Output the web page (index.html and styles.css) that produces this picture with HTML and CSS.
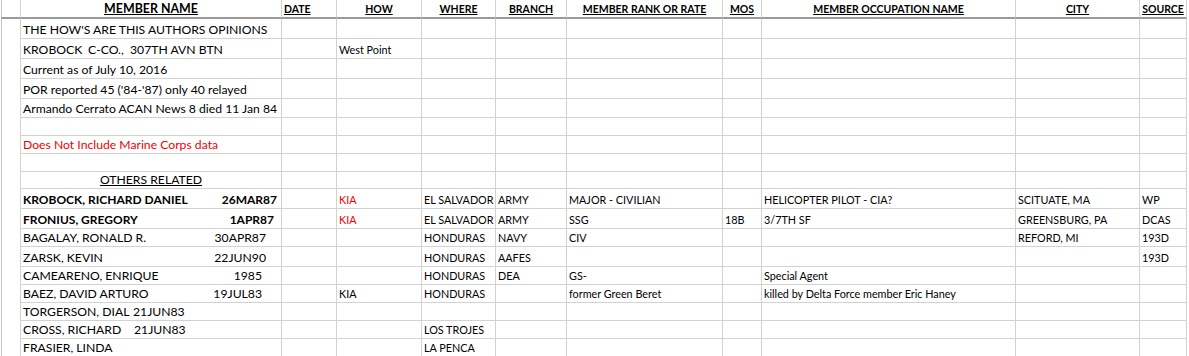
FILE: index.html
```html
<!DOCTYPE html>
<html lang="en">
<head>
<meta charset="utf-8">
<title>Member list</title>
<link rel="stylesheet" href="styles.css">
</head>
<body>
<div class="sheet">
  <div class="row head">
    <div class="c c0"></div>
    <div class="c ctr"><span class="hd big">MEMBER NAME</span></div>
    <div class="c"><span class="hd">DATE</span></div>
    <div class="c ctr"><span class="hd">HOW</span></div>
    <div class="c ctr"><span class="hd">WHERE</span></div>
    <div class="c ctr"><span class="hd">BRANCH</span></div>
    <div class="c ctr"><span class="hd">MEMBER RANK OR RATE</span></div>
    <div class="c ctr"><span class="hd">MOS</span></div>
    <div class="c ctr"><span class="hd">MEMBER OCCUPATION NAME</span></div>
    <div class="c ctr"><span class="hd">CITY</span></div>
    <div class="c ctr"><span class="hd">SOURCE</span></div>
  </div>

  <div class="row h20">
    <div class="c c0"></div><div class="c nm">THE HOW'S ARE THIS AUTHORS OPINIONS</div>
    <div class="c"></div><div class="c"></div><div class="c"></div><div class="c"></div><div class="c"></div><div class="c"></div><div class="c"></div><div class="c"></div><div class="c"></div>
  </div>
  <div class="row h20">
    <div class="c c0"></div><div class="c nm"><span class="w1">KROBOCK</span><span class="w2">C-CO.,</span><span>307TH AVN BTN</span></div>
    <div class="c"></div><div class="c sm">West Point</div><div class="c"></div><div class="c"></div><div class="c"></div><div class="c"></div><div class="c"></div><div class="c"></div><div class="c"></div>
  </div>
  <div class="row h20">
    <div class="c c0"></div><div class="c nm">Current as of July 10, 2016</div>
    <div class="c"></div><div class="c"></div><div class="c"></div><div class="c"></div><div class="c"></div><div class="c"></div><div class="c"></div><div class="c"></div><div class="c"></div>
  </div>
  <div class="row h20">
    <div class="c c0"></div><div class="c nm">POR reported 45 ('84-'87) only 40 relayed</div>
    <div class="c"></div><div class="c"></div><div class="c"></div><div class="c"></div><div class="c"></div><div class="c"></div><div class="c"></div><div class="c"></div><div class="c"></div>
  </div>
  <div class="row h19">
    <div class="c c0"></div><div class="c nm">Armando Cerrato ACAN News 8 died 11 Jan 84</div>
    <div class="c"></div><div class="c"></div><div class="c"></div><div class="c"></div><div class="c"></div><div class="c"></div><div class="c"></div><div class="c"></div><div class="c"></div>
  </div>
  <div class="row h18">
    <div class="c c0"></div><div class="c nm"></div>
    <div class="c"></div><div class="c"></div><div class="c"></div><div class="c"></div><div class="c"></div><div class="c"></div><div class="c"></div><div class="c"></div><div class="c"></div>
  </div>
  <div class="row h18">
    <div class="c c0"></div><div class="c nm red">Does Not Include Marine Corps data</div>
    <div class="c"></div><div class="c"></div><div class="c"></div><div class="c"></div><div class="c"></div><div class="c"></div><div class="c"></div><div class="c"></div><div class="c"></div>
  </div>
  <div class="row h18">
    <div class="c c0"></div><div class="c nm"></div>
    <div class="c"></div><div class="c"></div><div class="c"></div><div class="c"></div><div class="c"></div><div class="c"></div><div class="c"></div><div class="c"></div><div class="c"></div>
  </div>
  <div class="row h17">
    <div class="c c0"></div><div class="c nm ctr"><span class="ul">OTHERS RELATED</span></div>
    <div class="c"></div><div class="c"></div><div class="c"></div><div class="c"></div><div class="c"></div><div class="c"></div><div class="c"></div><div class="c"></div><div class="c"></div>
  </div>

  <div class="row h20">
    <div class="c c0"></div><div class="c nm b"><span>KROBOCK, RICHARD DANIEL</span><span class="dt r2">26MAR87</span></div>
    <div class="c"></div><div class="c sm red">KIA</div><div class="c sm">EL SALVADOR</div><div class="c sm">ARMY</div><div class="c sm">MAJOR - CIVILIAN</div><div class="c sm"></div><div class="c sm">HELICOPTER PILOT - CIA?</div><div class="c sm">SCITUATE, MA</div><div class="c sm">WP</div>
  </div>
  <div class="row h20">
    <div class="c c0"></div><div class="c nm b"><span>FRONIUS, GREGORY</span><span class="dt r5">1APR87</span></div>
    <div class="c"></div><div class="c sm red">KIA</div><div class="c sm">EL SALVADOR</div><div class="c sm">ARMY</div><div class="c sm">SSG</div><div class="c sm">18B</div><div class="c sm">3/7TH SF</div><div class="c sm">GREENSBURG, PA</div><div class="c sm">DCAS</div>
  </div>
  <div class="row h18">
    <div class="c c0"></div><div class="c nm"><span>BAGALAY, RONALD R.</span><span class="dt r13">30APR87</span></div>
    <div class="c"></div><div class="c sm"></div><div class="c sm">HONDURAS</div><div class="c sm">NAVY</div><div class="c sm">CIV</div><div class="c sm"></div><div class="c sm"></div><div class="c sm">REFORD, MI</div><div class="c sm">193D</div>
  </div>
  <div class="row h20">
    <div class="c c0"></div><div class="c nm"><span>ZARSK, KEVIN</span><span class="dt r13">22JUN90</span></div>
    <div class="c"></div><div class="c sm"></div><div class="c sm">HONDURAS</div><div class="c sm">AAFES</div><div class="c sm"></div><div class="c sm"></div><div class="c sm"></div><div class="c sm"></div><div class="c sm">193D</div>
  </div>
  <div class="row h18">
    <div class="c c0"></div><div class="c nm"><span>CAMEARENO, ENRIQUE</span><span class="dt r17">1985</span></div>
    <div class="c"></div><div class="c sm"></div><div class="c sm">HONDURAS</div><div class="c sm">DEA</div><div class="c sm">GS-</div><div class="c sm"></div><div class="c sm">Special Agent</div><div class="c sm"></div><div class="c sm"></div>
  </div>
  <div class="row h18">
    <div class="c c0"></div><div class="c nm"><span>BAEZ, DAVID ARTURO</span><span class="dt r17">19JUL83</span></div>
    <div class="c"></div><div class="c sm">KIA</div><div class="c sm">HONDURAS</div><div class="c sm"></div><div class="c sm">former Green Beret</div><div class="c sm"></div><div class="c sm">killed by Delta Force member Eric Haney</div><div class="c sm"></div><div class="c sm"></div>
  </div>
  <div class="row h18">
    <div class="c c0"></div><div class="c nm"><span class="wn">TORGERSON, DIAL</span><span>21JUN83</span></div>
    <div class="c"></div><div class="c sm"></div><div class="c sm"></div><div class="c sm"></div><div class="c sm"></div><div class="c sm"></div><div class="c sm"></div><div class="c sm"></div><div class="c sm"></div>
  </div>
  <div class="row h18">
    <div class="c c0"></div><div class="c nm"><span class="wn2">CROSS, RICHARD</span><span>21JUN83</span></div>
    <div class="c"></div><div class="c sm"></div><div class="c sm">LOS TROJES</div><div class="c sm"></div><div class="c sm"></div><div class="c sm"></div><div class="c sm"></div><div class="c sm"></div><div class="c sm"></div>
  </div>
  <div class="row h18">
    <div class="c c0"></div><div class="c nm">FRASIER, LINDA</div>
    <div class="c"></div><div class="c sm"></div><div class="c sm">LA PENCA</div><div class="c sm"></div><div class="c sm"></div><div class="c sm"></div><div class="c sm"></div><div class="c sm"></div><div class="c sm"></div>
  </div>
</div>
</body>
</html>
```
FILE: styles.css
```css
html, body {
  margin: 0;
  padding: 0;
  background: #ffffff;
  overflow: hidden;
}
.sheet {
  margin-left: 1px;
  width: 1186px;
  font-family: Lato, "Open Sans", sans-serif;
  color: #000;
}
.row {
  display: grid;
  grid-template-columns: 20px 261px 55px 85px 74px 71px 156px 39px 254px 124px 47px;
}
.h17 { height: 17px; }
.h18 { height: 18px; }
.h19 { height: 19px; }
.h20 { height: 20px; }
.head { height: 19px; }

.c {
  box-sizing: border-box;
  display: flex;
  align-items: flex-end;
  padding: 0 2px 1px 2px;
  border-right: 1px solid #d2d2d2;
  border-bottom: 1px solid #d2d2d2;
  font-size: 11px;
  line-height: 14px;
  white-space: nowrap;
  overflow: visible;
  min-width: 0;
}
.c0 {
  border-left: 1px solid #c4c4c4;
  border-bottom: none;
}
.head .c {
  border-bottom: 2px solid #9a9a9a;
  padding-bottom: 1px;
}
.ctr { justify-content: center; }

.hd {
  font-weight: 700;
  font-size: 10.5px;
  text-decoration: underline;
  text-decoration-thickness: 1px;
  text-underline-offset: 1px;
}
.hd.big { font-size: 12.4px; }

.nm { font-size: 12.2px; }
.sm { font-size: 10.8px; }
.b { font-weight: 700; font-size: 12px; }
.red { color: #f20000; }
.ul {
  text-decoration: underline;
  text-decoration-thickness: 1px;
  text-underline-offset: 1px;
}

.w1 { display: inline-block; width: 65px; }
.w2 { display: inline-block; width: 42px; }
.wn { display: inline-block; width: 110px; }
.wn2 { display: inline-block; width: 111px; }

.dt { margin-left: auto; }
.r2 { margin-right: 2px; }
.r5 { margin-right: 5px; }
.r13 { margin-right: 13px; }
.r17 { margin-right: 17px; }
```
